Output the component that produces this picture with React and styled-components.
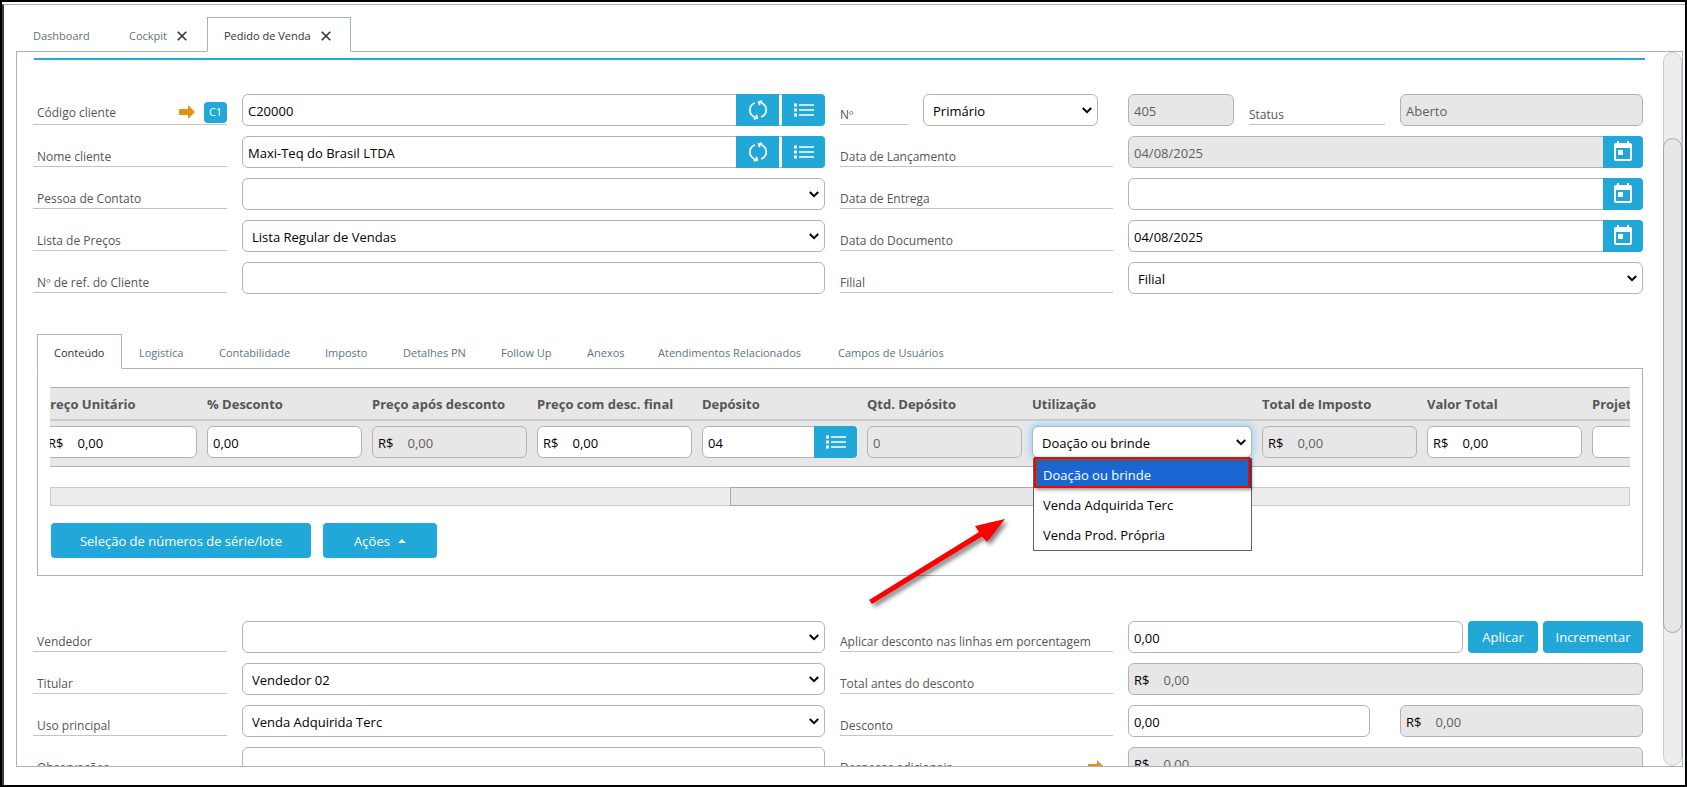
import React, { useId } from 'react'
import styled, { createGlobalStyle, css } from 'styled-components'
import { MdToday } from 'react-icons/md'

const outerTabs = [
    { name: 'Dashboard', width: 96 },
    { name: 'Cockpit', width: 95, closable: true },
    { name: 'Pedido de Venda', width: 144, closable: true, active: true },
]

const innerTabs = [
    { name: 'Conteúdo', width: 85, active: true },
    { name: 'Logistica', width: 80 },
    { name: 'Contabilidade', width: 106 },
    { name: 'Imposto', width: 78 },
    { name: 'Detalhes PN', width: 98 },
    { name: 'Follow Up', width: 86 },
    { name: 'Anexos', width: 71 },
    { name: 'Atendimentos Relacionados', width: 180 },
    { name: 'Campos de Usuários', width: 144 },
]

const columns = [
    { name: 'Preço Unitário', type: 'money' },
    { name: '% Desconto', type: 'text', value: '0,00' },
    { name: 'Preço após desconto', type: 'money', disabled: true },
    { name: 'Preço com desc. final', type: 'money' },
    { name: 'Depósito', type: 'lookup', value: '04' },
    { name: 'Qtd. Depósito', type: 'text', value: '0', disabled: true },
    { name: 'Utilização', type: 'usage', wide: true },
    { name: 'Total de Imposto', type: 'money', disabled: true },
    { name: 'Valor Total', type: 'money' },
    { name: 'Projeto', type: 'text', value: '' },
]

const usages = ['Doação ou brinde', 'Venda Adquirida Terc', 'Venda Prod. Própria']

const CloseIcon = () => (
    <svg width="10" height="10" viewBox="0 0 10 10" fill="none" stroke="#333" strokeWidth="1.6">
        <path d="M0.7 0.7L9.3 9.3M9.3 0.7L0.7 9.3" />
    </svg>
)

const RefreshIcon = () => (
    <svg width="20" height="20" viewBox="0 0 20 20" fill="none" stroke="#fff" strokeWidth="1.7">
        <path d="M7 3C3.600 4.300 1.800 7 1.800 10C1.800 13.300 4 16.500 8.500 18" />
        <path d="M13 17C16.400 15.700 18.200 13 18.200 10C18.200 6.700 16 3.500 11.500 2" />
        <path d="M5.800 18.900L9.300 18.200L8.300 14.800" />
        <path d="M14.200 1.100L10.700 1.800L11.700 5.200" />
    </svg>
)

const ListIcon = () => (
    <svg width="20" height="14" viewBox="0 0 20 14" fill="#fff">
        <path d="M0 0.500h3v3H0zM0 5.500h3v3H0zM0 10.500h3v3H0z" />
        <path d="M5 1.200h15v1.600H5zM5 6.200h15v1.600H5zM5 11.200h15v1.600H5z" />
    </svg>
)

const LinkArrow = () => (
    <svg width="16" height="14" viewBox="0 0 16 14" fill="#e09214">
        <path d="M0 4h9V0l7 7l-7 7v-4H0z" />
    </svg>
)

const PointerArrow = () => (
    <PointerSvg width="150" height="100" viewBox="0 0 150 100">
        <path d="M9 82L119 14L115 8L145 1L127 24L122 18.500L12 86z" fill="#fe0000" />
    </PointerSvg>
)

const TextField = ({ label, value = '', disabled, id }) => (
    <Control $disabled={disabled}>
        <Input id={id} aria-label={id ? undefined : label} defaultValue={value} disabled={disabled} />
    </Control>
)

const MoneyField = ({ label, disabled, id }) => (
    <Control $disabled={disabled}>
        <Currency>R$</Currency>
        <Input id={id} aria-label={id ? undefined : label} defaultValue="0,00" disabled={disabled} $money />
    </Control>
)

const SelectField = ({ label, value = '', id, focused }) => (
    <SelectBox>
        <Select id={id} aria-label={id ? undefined : label} defaultValue={value} $focused={focused}>
            <option value={value}>{value}</option>
        </Select>
        <Chevron width="10" height="7" viewBox="0 0 10 7" fill="none" stroke="#000" strokeWidth="2">
            <path d="M0.800 1L5 5.200L9.200 1" />
        </Chevron>
    </SelectBox>
)

const DateField = ({ value = '', disabled, id }) => (
    <Control $disabled={disabled}>
        <Input id={id} defaultValue={value} disabled={disabled} />
        <IconButton type="button" aria-label="Abrir calendário" $width={40} $last>
            <MdToday size={24} />
        </IconButton>
    </Control>
)

const LookupField = ({ label, value, id, refresh }) => (
    <Control>
        <Input id={id} aria-label={id ? undefined : label} defaultValue={value} />
        {refresh && (
            <IconButton type="button" aria-label="Atualizar" $width={43} $spaced>
                <RefreshIcon />
            </IconButton>
        )}
        <IconButton type="button" aria-label="Listar" $width={43} $last>
            <ListIcon />
        </IconButton>
    </Control>
)

// label on the left, control on the right, each one a cell of the form grid
const Field = ({ label, as: Kind, badge, link, indent, ...rest }) => {
    const id = useId()
    return (
        <>
            <LabelCell $indent={indent}>
                <Label htmlFor={id} $tall={badge}>
                    {label}
                </Label>
                {(badge || link) && (
                    <LabelExtra $inset={!badge}>
                        <LinkArrow />
                        {badge && <Badge>{badge}</Badge>}
                    </LabelExtra>
                )}
            </LabelCell>
            <Kind id={id} {...rest} />
        </>
    )
}

const UsageField = () => (
    <UsageWrapper>
        <SelectField label="Utilização" value={usages[0]} focused />
        <Menu role="listbox">
            {usages.map((usage, i) => (
                <MenuItem key={usage} role="option" aria-selected={i === 0} $selected={i === 0}>
                    {usage}
                </MenuItem>
            ))}
        </Menu>
        <Highlight />
    </UsageWrapper>
)

const CellField = ({ column }) => {
    const { type, name, value, disabled } = column
    if (type === 'money') return <MoneyField label={name} disabled={disabled} />
    if (type === 'lookup') return <LookupField label={name} value={value} />
    if (type === 'usage') return <UsageField />
    return <TextField label={name} value={value} disabled={disabled} />
}

const Tabs = ({ tabs }) => (
    <TabBar role="tablist">
        {tabs.map((tab) => (
            <Tab key={tab.name} type="button" role="tab" aria-selected={!!tab.active} $active={tab.active} $width={tab.width}>
                {tab.name}
                {tab.closable && <CloseIcon />}
            </Tab>
        ))}
    </TabBar>
)

const HeaderForm = () => (
    <FormGrid>
        <Field as={LookupField} label="Código cliente" value="C20000" badge="C1" indent refresh />
        <NumberGroup>
            <Field as={SelectField} label="Nº" value="Primário" />
        </NumberGroup>
        <StatusGroup>
            <TextField label="Número" value="405" disabled />
            <Field as={TextField} label="Status" value="Aberto" disabled />
        </StatusGroup>
        <Field as={LookupField} label="Nome cliente" value="Maxi-Teq do Brasil LTDA" indent refresh />
        <Field as={DateField} label="Data de Lançamento" value="04/08/2025" disabled />
        <Field as={SelectField} label="Pessoa de Contato" indent />
        <Field as={DateField} label="Data de Entrega" />
        <Field as={SelectField} label="Lista de Preços" value="Lista Regular de Vendas" indent />
        <Field as={DateField} label="Data do Documento" value="04/08/2025" />
        <Field as={TextField} label="Nº de ref. do Cliente" indent />
        <Field as={SelectField} label="Filial" value="Filial" />
    </FormGrid>
)

const DiscountApply = ({ id }) => (
    <ApplyGroup>
        <TextField id={id} value="0,00" />
        <Button type="button" $width={70}>
            Aplicar
        </Button>
        <Button type="button" $width={100}>
            Incrementar
        </Button>
    </ApplyGroup>
)

const DiscountValues = ({ id }) => (
    <DiscountGroup>
        <TextField id={id} value="0,00" />
        <MoneyField label="Valor do desconto" disabled />
    </DiscountGroup>
)

const FooterForm = () => (
    <FormGrid>
        <Field as={SelectField} label="Vendedor" indent />
        <Field as={DiscountApply} label="Aplicar desconto nas linhas em porcentagem" />
        <Field as={SelectField} label="Titular" value="Vendedor 02" indent />
        <Field as={MoneyField} label="Total antes do desconto" disabled />
        <Field as={SelectField} label="Uso principal" value="Venda Adquirida Terc" indent />
        <Field as={DiscountValues} label="Desconto" />
        <Field as={TextField} label="Observações" indent />
        <Field as={MoneyField} label="Despesas adicionais" link disabled />
    </FormGrid>
)

const ItemsPanel = () => (
    <ItemsBox>
        <TableScroller>
            <Table>
                <thead>
                    <tr>
                        {columns.map((column) => (
                            <Th key={column.name} scope="col" $wide={column.wide}>
                                {column.name}
                            </Th>
                        ))}
                    </tr>
                </thead>
                <tbody>
                    <tr>
                        {columns.map((column) => (
                            <Td key={column.name}>
                                <CellField column={column} />
                            </Td>
                        ))}
                    </tr>
                </tbody>
            </Table>
        </TableScroller>
        <HorizontalTrack>
            <HorizontalThumb />
        </HorizontalTrack>
        <Actions>
            <Button type="button" $width={260} $tall>
                Seleção de números de série/lote
            </Button>
            <Button type="button" $width={114} $tall>
                Ações
                <Caret />
            </Button>
        </Actions>
        <PointerArrow />
    </ItemsBox>
)

const App = () => {
    return (
        <>
            <GlobalStyle />
            <Frame>
                <Inner>
                    <Tabs tabs={outerTabs} />
                    <Page>
                        <Content>
                            <TopRule />
                            <HeaderForm />
                            <ItemsSection>
                                <Tabs tabs={innerTabs} />
                                <ItemsPanel />
                            </ItemsSection>
                            <FooterForm />
                        </Content>
                        <VerticalTrack>
                            <VerticalThumb />
                        </VerticalTrack>
                    </Page>
                </Inner>
            </Frame>
        </>
    )
}

const GlobalStyle = createGlobalStyle`
    * {
        box-sizing: border-box;
    }

    body {
        margin: 0;
        background: #fff;
    }

    body,
    button,
    input,
    select {
        font-family: 'Open Sans', 'Noto Sans', sans-serif;
        font-size: 13px;
    }
`

const Frame = styled.div`
    display: flex;
    height: 100vh;
    padding-top: 2px;
    border: 2px solid #000;
    overflow: hidden;
`

const Inner = styled.div`
    display: flex;
    flex: 1;
    flex-direction: column;
    min-width: 0;
    padding: 12px 2px 18px 12px;
    border-top: 1px solid #a2b3bc;
    border-left: 2px solid #303d45;
`

const TabBar = styled.div`
    display: flex;
    flex: none;
`

const Tab = styled.button`
    display: flex;
    align-items: center;
    gap: 10px;
    width: ${(props) => props.$width}px;
    height: 35px;
    margin-bottom: -1px;
    padding: 3px 0 0 16px;
    border: 1px solid transparent;
    background: transparent;
    color: #5d7480;
    font-size: 11px;
    line-height: 16px;
    white-space: nowrap;

    ${(props) =>
        props.$active &&
        css`
            z-index: 1;
            border-color: #a2b5bd;
            border-bottom-color: #fff;
            background: #fff;
            color: #333;
        `}
`

const Page = styled.main`
    display: flex;
    flex: 1;
    min-height: 0;
    border: 1px solid #a2b5bd;
`

const Content = styled.div`
    flex: 1;
    min-width: 0;
    overflow: hidden;
`

const TopRule = styled.div`
    height: 2px;
    margin: 6px 18px 34px 17px;
    background: #22a7d9;
`

const FormGrid = styled.form`
    display: grid;
    grid-template-columns: minmax(0, 194fr) minmax(0, 583fr) minmax(0, 273fr) minmax(0, 515fr);
    gap: 10px 15px;
    margin: 0 20px 0 16px;
`

const LabelCell = styled.div`
    display: flex;
    align-items: flex-end;
    justify-content: space-between;
    height: 31px;
    padding-left: ${(props) => (props.$indent ? '4px' : '0')};
    border-bottom: 1px solid #c4c4c4;
`

const Label = styled.label`
    color: #555;
    font-size: 12px;
    line-height: ${(props) => (props.$tall ? '22px' : '18px')};
    white-space: nowrap;
`

const LabelExtra = styled.span`
    display: flex;
    align-items: center;
    gap: 9px;
    height: ${(props) => (props.$inset ? '20px' : '24px')};
    margin-right: ${(props) => (props.$inset ? '9px' : '0')};
`

const Badge = styled.span`
    width: 23px;
    height: 21px;
    border-radius: 4px;
    background: #22a7d9;
    color: #fff;
    font-size: 11px;
    line-height: 20px;
    text-align: center;
`

const NumberGroup = styled.div`
    display: grid;
    grid-template-columns: minmax(0, 68fr) minmax(0, 175fr);
    gap: 15px;
    padding-right: 15px;
`

const StatusGroup = styled.div`
    display: grid;
    grid-template-columns: minmax(0, 106fr) minmax(0, 136fr) minmax(0, 243fr);
    gap: 15px;
`

const ApplyGroup = styled.div`
    display: flex;
    gap: 5px;
`

const DiscountGroup = styled.div`
    display: grid;
    grid-template-columns: minmax(0, 242fr) minmax(0, 243fr);
    gap: 30px;
`

const Control = styled.div`
    display: flex;
    flex: 1;
    align-items: center;
    min-width: 0;
    height: 32px;
    border: 1px solid #b3b3b3;
    border-radius: 6px;
    background: ${(props) => (props.$disabled ? '#e7e7e7' : '#fff')};
`

const Input = styled.input`
    flex: 1;
    min-width: 0;
    height: 30px;
    padding: 2px 5px 0;
    padding-left: ${(props) => (props.$money ? '14px' : '5px')};
    border: 0;
    outline: 0;
    background: transparent;
    color: #000;

    &:disabled {
        color: #5f5f5f;
    }
`

const Currency = styled.span`
    padding: 2px 0 0 5px;
    color: #000;
    line-height: 20px;
`

const SelectBox = styled.div`
    position: relative;
    min-width: 0;
`

const Select = styled.select`
    display: block;
    width: 100%;
    height: 32px;
    padding: 2px 20px 0 9px;
    border: 1px solid #b3b3b3;
    border-radius: 6px;
    outline: 0;
    appearance: none;
    background: #fff;
    color: #000;
    box-shadow: ${(props) => (props.$focused ? '0 0 6px 2px #9ad4fb' : 'none')};
`

const Chevron = styled.svg`
    position: absolute;
    top: 13px;
    right: 6px;
    pointer-events: none;
`

const IconButton = styled.button`
    display: flex;
    flex: none;
    align-items: center;
    justify-content: center;
    width: ${(props) => props.$width}px;
    height: 32px;
    margin-right: ${(props) => (props.$spaced ? '3px' : '-1px')};
    padding: 0;
    border: 0;
    border-radius: ${(props) => (props.$last ? '0 4px 4px 0' : '0')};
    background: #22a7d9;
    color: #fff;
`

const Button = styled.button`
    display: flex;
    flex: none;
    align-items: center;
    justify-content: center;
    gap: 8px;
    width: ${(props) => props.$width}px;
    height: ${(props) => (props.$tall ? '35px' : '32px')};
    padding: 0;
    border: 0;
    border-radius: 4px;
    background: #22a7d9;
    color: #fff;
    white-space: nowrap;
`

const Caret = styled.span`
    border: 4px solid transparent;
    border-top: 0;
    border-bottom-color: #fff;
`

const ItemsSection = styled.section`
    margin: 40px 20px 45px;
`

const ItemsBox = styled.div`
    position: relative;
    padding: 18px 12px 17px;
    border: 1px solid #a2b5bd;
`

// only the horizontal overflow is cut, the open menu hangs below the row
const TableScroller = styled.div`
    overflow-x: clip;
    border-top: 1px solid #a2b5bd;
    border-bottom: 1px solid #b0b0b0;
    background: #e7e7e7;
`

const Table = styled.table`
    width: 1715px;
    margin-left: -13px;
    border-spacing: 0;
    table-layout: fixed;
`

const Th = styled.th`
    width: ${(props) => (props.$wide ? '230px' : '165px')};
    height: 33px;
    padding: 0 5px;
    border-bottom: 2px solid #cbcbcb;
    color: #555;
    font-weight: 700;
    text-align: left;
    white-space: nowrap;
`

const Td = styled.td`
    padding: 5px 5px 8px;
`

const UsageWrapper = styled.div`
    position: relative;
`

const Menu = styled.ul`
    position: absolute;
    z-index: 2;
    top: 32px;
    left: 1px;
    width: 219px;
    margin: 0;
    padding: 0 0 2px;
    border: 1px solid #5f6368;
    border-top: 0;
    background: #fff;
    list-style: none;
`

const MenuItem = styled.li`
    height: 30px;
    padding-left: 9px;
    background: ${(props) => (props.$selected ? '#1967d2' : 'transparent')};
    color: ${(props) => (props.$selected ? '#fff' : '#000')};
    line-height: 34px;
`

const Highlight = styled.div`
    position: absolute;
    z-index: 3;
    top: 31px;
    left: 2px;
    width: 216px;
    height: 31px;
    border: 2px solid #fe0000;
    box-shadow: 2px 2px 3px rgba(0, 0, 0, 0.4), inset 2px 2px 5px rgba(90, 90, 90, 0.7);
`

const HorizontalTrack = styled.div`
    height: 19px;
    margin-top: 20px;
    border: 1px solid #cbcbcb;
    background: #ededed;
`

const HorizontalThumb = styled.div`
    width: 32%;
    height: 19px;
    margin: -1px 0 0 43%;
    border: 1px solid #a8a8a8;
    background: #e7e7e7;
`

const Actions = styled.div`
    display: flex;
    gap: 12px;
    margin: 17px 1px 0;
`

const PointerSvg = styled.svg`
    position: absolute;
    top: 149px;
    left: 822px;
    filter: drop-shadow(3px 3px 2px rgba(0, 0, 0, 0.5));
    pointer-events: none;
`

const VerticalTrack = styled.div`
    flex: none;
    width: 19px;
    padding-top: 85px;
    border: 1px solid #cbcbcb;
    border-radius: 10px;
    background: #ededed;
`

const VerticalThumb = styled.div`
    height: 79%;
    margin: 0 -1px;
    border: 1px solid #a8a8a8;
    border-radius: 10px;
    background: #e7e7e7;
`

export default App
